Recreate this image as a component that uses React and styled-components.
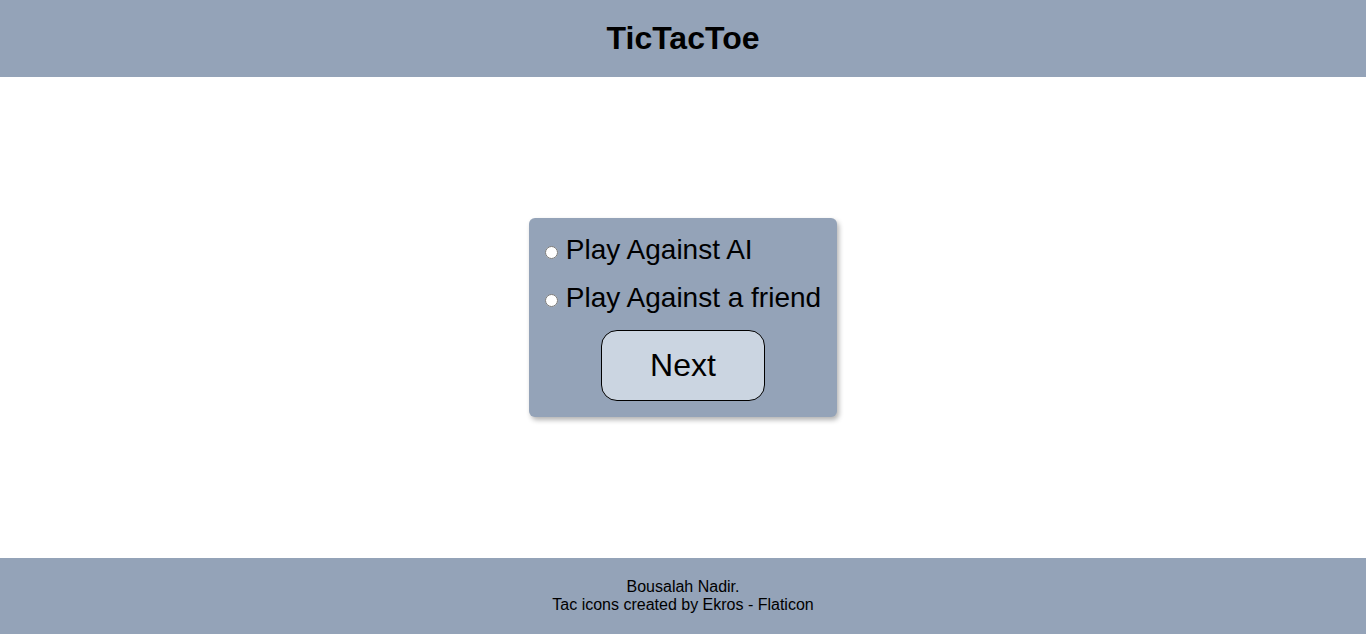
import React, { useState } from "react";
import styled, { createGlobalStyle } from "styled-components";

const GlobalStyle = createGlobalStyle`
  * {
    box-sizing: border-box;
  }
  body {
    margin: 0;
    font-family: "Liberation Sans", Arial, sans-serif;
    color: #000;
  }
`;

const Page = styled.div`
  display: flex;
  flex-direction: column;
  min-height: 100vh;
`;

const Header = styled.header`
  height: 77px;
  background: #94a3b8;
  display: flex;
  align-items: center;
  justify-content: center;
`;

const Title = styled.h1`
  margin: 0;
  font-size: 32px;
  font-weight: bold;
`;

const Main = styled.main`
  flex: 1;
  display: flex;
  align-items: center;
  justify-content: center;
`;

const Card = styled.form`
  display: flex;
  flex-direction: column;
  gap: 16px;
  padding: 16px;
  background: #94a3b8;
  border-radius: 6px;
  box-shadow: 2px 3px 5px rgba(0, 0, 0, 0.3);
`;

const Option = styled.label`
  display: flex;
  align-items: center;
  gap: 8px;
  font-size: 28px;
  line-height: 32px;
  cursor: pointer;
`;

const Radio = styled.input`
  margin: 4px 0 0 0;
  width: 13px;
  height: 13px;
`;

const NextButton = styled.button`
  align-self: center;
  padding: 16px 48px;
  font-family: inherit;
  font-size: 32px;
  line-height: 37px;
  color: #000;
  background: #cbd5e1;
  border: 1px solid #000;
  border-radius: 16px;
  cursor: pointer;
`;

const Footer = styled.footer`
  height: 76px;
  background: #94a3b8;
  display: flex;
  flex-direction: column;
  align-items: center;
  justify-content: center;
  font-size: 16px;
  line-height: 18px;
`;

export default function App() {
  const [mode, setMode] = useState("");

  const onSubmitHandler = (e) => {
    e.preventDefault();
  };

  return (
    <>
      <GlobalStyle />
      <Page>
        <Header>
          <Title>TicTacToe</Title>
        </Header>
        <Main>
          <Card onSubmit={onSubmitHandler}>
            <Option>
              <Radio
                type="radio"
                name="mode"
                value="ai"
                checked={mode === "ai"}
                onChange={(e) => setMode(e.target.value)}
              />
              Play Against AI
            </Option>
            <Option>
              <Radio
                type="radio"
                name="mode"
                value="friend"
                checked={mode === "friend"}
                onChange={(e) => setMode(e.target.value)}
              />
              Play Against a friend
            </Option>
            <NextButton type="submit">Next</NextButton>
          </Card>
        </Main>
        <Footer>
          <div>Bousalah Nadir.</div>
          <div>Tac icons created by Ekros - Flaticon</div>
        </Footer>
      </Page>
    </>
  );
}
